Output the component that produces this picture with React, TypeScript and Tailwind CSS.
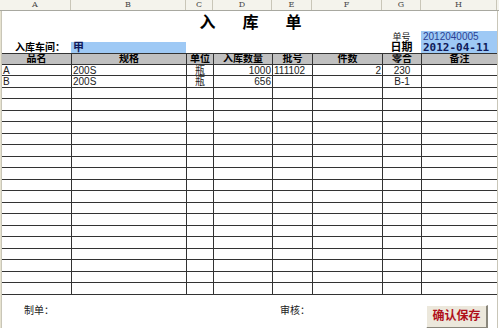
import React from 'react'

const COLS = [
  { key: 'A', w: 'w-[71px]' },
  { key: 'B', w: 'w-[115px]' },
  { key: 'C', w: 'w-[27px]' },
  { key: 'D', w: 'w-[59px]' },
  { key: 'E', w: 'w-[40px]' },
  { key: 'F', w: 'w-[70px]' },
  { key: 'G', w: 'w-[39px]' },
  { key: 'H', w: 'w-[76px]' },
]

const GRID = 'grid grid-cols-[69px_115px_27px_59px_40px_70px_39px_76px]'

const HEADERS = ['品名', '规格', '单位', '入库数量', '批号', '件数', '零合', '备注']

// align per column: l / c / r
const ALIGN = ['text-left', 'text-left', 'text-center', 'text-right', 'text-left', 'text-right', 'text-center', 'text-left']

const ROWS: string[][] = [
  ['A', '200S', '瓶', '1000', '111102', '2', '230', ''],
  ['B', '200S', '瓶', '656', '', '', 'B-1', ''],
]

const FONT = "font-['Liberation_Sans','Noto_Sans_CJK_SC',sans-serif]"

function ColumnBar() {
  return (
    <div className="flex h-[11px] bg-[#f4f3ec] border-b border-[#a8a8a0]">
      {COLS.map(c => (
        <div
          key={c.key}
          className={`${c.w} shrink-0 border-r border-[#c9c6b8] text-center text-[8px] leading-[10px] text-[#444] font-['DejaVu_Serif',serif]`}
        >
          {c.key}
        </div>
      ))}
      <div className="flex-1" />
    </div>
  )
}

function DataRow({ cells, tall }: { cells: string[]; tall: boolean }) {
  return (
    <div className={`${GRID} ${tall ? 'h-[12px]' : 'h-[11px]'} border-b border-[#333]`}>
      {cells.map((v, i) => (
        <div
          key={i}
          className={`${ALIGN[i]} ${i === 0 ? '' : 'border-l'} border-[#333] px-[1px] text-[10px] leading-[11px] text-[#222] overflow-hidden whitespace-nowrap`}
        >
          {v}
        </div>
      ))}
    </div>
  )
}

export default function App() {
  const rows: string[][] = []
  for (let i = 0; i < 20; i++) {
    rows.push(ROWS[i] || ['', '', '', '', '', '', '', ''])
  }

  return (
    <div className={`w-[499px] h-[328px] bg-white overflow-hidden flex flex-col ${FONT}`}>
      <ColumnBar />
      <div className="flex flex-1">
        {/* row header edge */}
        <div className="w-[2px] bg-[#e6e2cf] border-r border-[#c9c6b8]" />
        <div className="w-[495px] flex flex-col">
          {/* title */}
          <div className="h-[20px] flex justify-center items-end gap-[27px] pl-[2px] text-[16px] font-bold leading-none text-black">
            <span>入</span>
            <span>库</span>
            <span>单</span>
          </div>

          {/* 单号 / 日期 rows */}
          <div className="flex h-[22px]">
            <div className="flex flex-col w-[380px]">
              <div className="h-[11px]" />
              <div className="flex h-[11px] items-center">
                <div className="w-[69px] pr-[6px] text-right text-[10px] font-bold leading-[11px] text-black">
                  入库车间：
                </div>
                <div className="w-[115px] h-[11px] bg-[#9ec9f5] pl-[2px] text-[11px] font-bold leading-[11px] text-[#111a5c]">
                  甲
                </div>
              </div>
            </div>
            <div className="w-[39px] flex flex-col items-center">
              <div className="h-[11px] text-[9px] leading-[12px] text-[#222]">单号</div>
              <div className="h-[11px] text-[11px] font-bold leading-[11px] text-black">日期</div>
            </div>
            <div className="w-[76px] bg-[#9ec9f5] flex flex-col pl-[2px]">
              <div className="h-[11px] text-[10px] leading-[12px] text-[#2a3f94]">2012040005</div>
              <div className="h-[11px] text-[11px] font-bold leading-[11px] text-[#0f1a5a] font-['DejaVu_Sans_Mono',monospace]">
                2012-04-11
              </div>
            </div>
          </div>

          {/* table */}
          <div className="border-t border-[#333]">
            <div className={`${GRID} h-[11px] bg-[#c0c0c0] border-b border-[#333]`}>
              {HEADERS.map((h, i) => (
                <div
                  key={h}
                  className={`${i === 0 ? '' : 'border-l'} border-[#333] text-center text-[10px] font-bold leading-[10px] text-black whitespace-nowrap overflow-hidden`}
                >
                  {h}
                </div>
              ))}
            </div>
            {rows.map((r, i) => (
              <DataRow key={i} cells={r} tall={i % 2 === 1} />
            ))}
          </div>

          {/* footer */}
          <div className="flex flex-1">
            <div className="w-[250px] pl-[22px] pt-[11px] text-[10px] leading-none text-[#222]">制单：</div>
            <div className="w-[150px] pl-[28px] pt-[11px] text-[10px] leading-none text-[#222]">审核：</div>
            <div className="pl-[24px] pt-[8px]">
              <button className="w-[62px] h-[24px] bg-[#ece8dc] border-r-2 border-b-2 border-[#8a877c] border-t border-l border-t-white border-l-white text-[12px] font-bold text-[#b0101a]">
                确认保存
              </button>
            </div>
          </div>
        </div>
        <div className="flex-1 border-l border-[#c9c6b8]" />
      </div>
    </div>
  )
}
